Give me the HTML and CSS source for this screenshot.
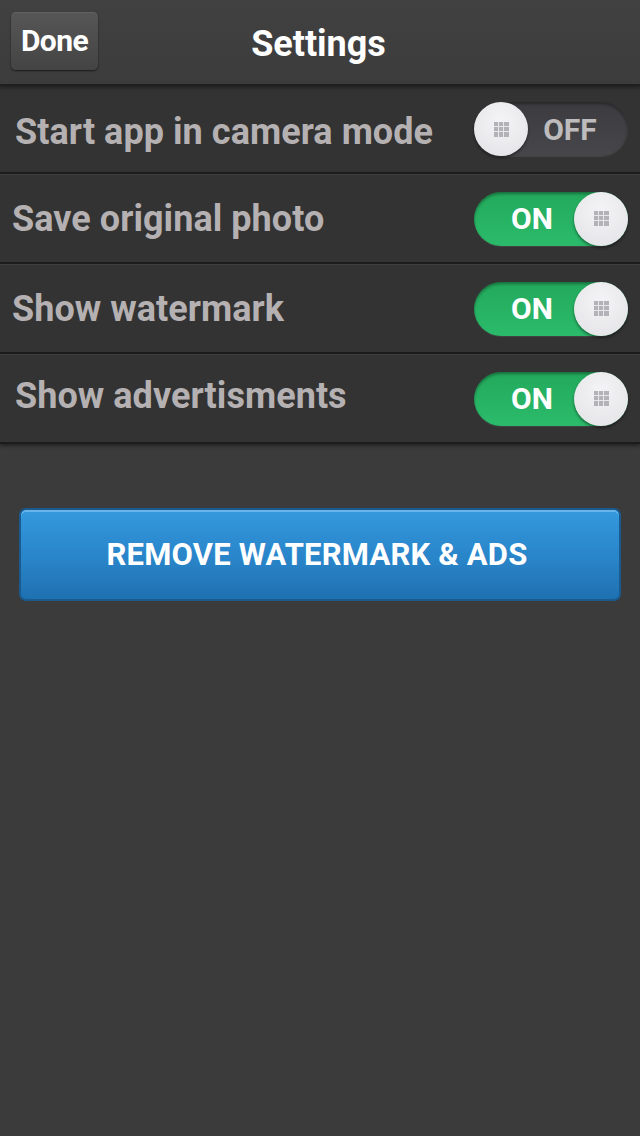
FILE: index.html
```html
<!DOCTYPE html>
<html>
<head>
<meta charset="utf-8">
<link rel="stylesheet" href="styles.css">
</head>
<body>
<div class="screen">
  <header class="nav">
    <button class="done">Done</button>
    <h1 class="title">Settings</h1>
  </header>
  <ul class="list">
    <li class="row">
      <span class="label inset low">Start app in camera mode</span>
      <div class="toggle off"><span class="knob"><i class="grip"></i></span><span class="state">OFF</span></div>
    </li>
    <li class="row">
      <span class="label">Save original photo</span>
      <div class="toggle on"><span class="state">ON</span><span class="knob"><i class="grip"></i></span></div>
    </li>
    <li class="row">
      <span class="label">Show watermark</span>
      <div class="toggle on"><span class="state">ON</span><span class="knob"><i class="grip"></i></span></div>
    </li>
    <li class="row">
      <span class="label inset high">Show advertisments</span>
      <div class="toggle on"><span class="state">ON</span><span class="knob"><i class="grip"></i></span></div>
    </li>
  </ul>
  <div class="actions">
    <button class="buy">REMOVE WATERMARK &amp; ADS</button>
  </div>
</div>
</body>
</html>
```
FILE: styles.css
```css
* { box-sizing: border-box; }
html, body { margin: 0; padding: 0; }
body {
  width: 640px;
  height: 1136px;
  background: #3b3b3b;
  font-family: "Roboto", "Liberation Sans", sans-serif;
  overflow: hidden;
}
.screen { display: flex; flex-direction: column; }
.nav {
  height: 86px;
  background: linear-gradient(#414141, #3c3c3c);
  border-bottom: 2px solid #1f1f1f;
  box-shadow: 0 2px 3px rgba(0,0,0,0.35);
  display: flex;
  align-items: flex-start;
  position: relative;
  z-index: 2;
}
.done {
  margin: 12px 0 0 11px;
  width: 87px;
  height: 58px;
  border-radius: 5px;
  border: none;
  background: linear-gradient(#565656, #444444);
  box-shadow: 0 1px 2px rgba(0,0,0,0.6), inset 0 1px 0 rgba(255,255,255,0.08);
  color: #fff;
  font-family: inherit;
  font-weight: 700;
  font-size: 30px;
  letter-spacing: -0.6px;
  padding: 0 0 2px 0;
}
.title {
  margin: 22px 0 0 -3px;
  position: absolute;
  left: 0; right: 0;
  text-align: center;
  color: #fff;
  font-size: 36px;
  font-weight: 700;
  line-height: 44px;
  pointer-events: none;
}
.list { list-style: none; margin: 0; padding: 0; }
.row {
  height: 90px;
  background: #333333;
  border-bottom: 2px solid #1c1c1c;
  border-top: 1px solid #3e3e3e;
  display: flex;
  align-items: center;
  justify-content: space-between;
  padding: 0 12px 0 12px;
}
.row:first-child { height: 88px; border-top: none; }
.row:last-child { box-shadow: 0 2px 3px rgba(0,0,0,0.4); }
.label {
  color: #b5b1b2;
  font-size: 36px;
  font-weight: 700;
  letter-spacing: 0.05px;
}
.label.inset { margin-left: 3px; }
.label.low { padding-top: 6px; }
.label.high { padding-bottom: 6px; }
.toggle {
  width: 154px;
  height: 54px;
  border-radius: 27px;
  display: flex;
  align-items: center;
  position: relative;
  box-shadow: inset 0 2px 3px rgba(0,0,0,0.35), 0 1px 0 rgba(255,255,255,0.08);
}
.toggle.off { background: linear-gradient(#3c3c40, #47474b); }
.toggle.on { background: linear-gradient(#23a95c, #2bbb6b); }
.state {
  flex: 1;
  text-align: center;
  font-size: 30px;
  font-weight: 700;
}
.toggle.off .state { color: #bdbbbc; padding-right: 16px; }
.toggle.on .state { color: #fff; padding-left: 16px; }
.knob {
  width: 54px;
  height: 54px;
  border-radius: 50%;
  background: radial-gradient(circle at 50% 35%, #f4f4f6, #e2e2e6);
  box-shadow: 0 2px 3px rgba(0,0,0,0.45);
  display: flex;
  align-items: center;
  justify-content: center;
  flex: none;
}
.grip {
  width: 15px;
  height: 15px;
  background:
    linear-gradient(90deg, transparent 4px, #e8e8ec 4px, #e8e8ec 5px, transparent 5px, transparent 9px, #e8e8ec 9px, #e8e8ec 10px, transparent 10px),
    linear-gradient(transparent 4px, #e8e8ec 4px, #e8e8ec 5px, transparent 5px, transparent 9px, #e8e8ec 9px, #e8e8ec 10px, transparent 10px),
    #b3b3b7;
  display: block;
}
.actions { padding: 64px 19px 0 19px; }
.buy {
  width: 602px;
  height: 93px;
  border-radius: 7px;
  border: 2px solid #1a5a8e;
  background: linear-gradient(#3499dd, #2a86cb 50%, #1f71b0);
  box-shadow: inset 0 2px 0 rgba(140,200,245,0.6);
  color: #fff;
  font-family: inherit;
  font-weight: 700;
  font-size: 31px;
  letter-spacing: 0.2px;
  padding: 0 6px 0 0;
}
```
